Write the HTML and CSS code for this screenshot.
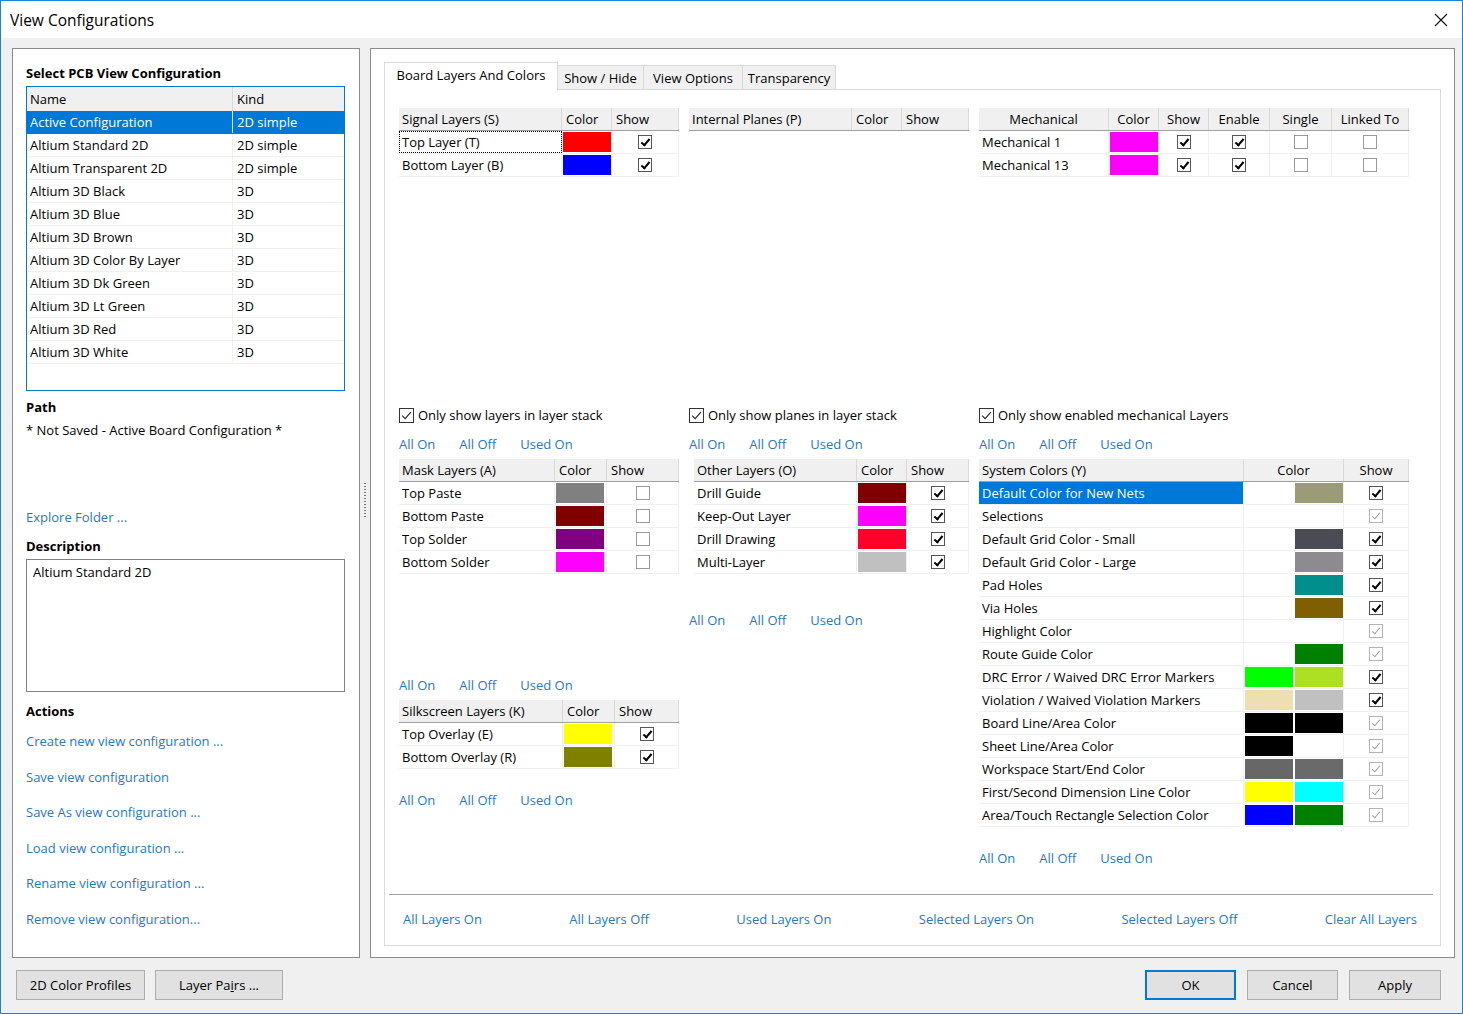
FILE: index.html
```html
<!DOCTYPE html>
<html>
<head>
<meta charset="utf-8">
<title>View Configurations</title>
<link rel="stylesheet" href="styles.css">
</head>
<body>
<div class="window">
  <div class="titlebar">
    <span class="title">View Configurations</span>
    <svg class="close" width="14" height="14" viewBox="0 0 14 14"><path d="M1 1L13 13M13 1L1 13" stroke="#111" stroke-width="1.1" fill="none"/></svg>
  </div>

  <div class="main">
    <div class="left-panel">
      <div class="heading">Select PCB View Configuration</div>
      <div class="list">
        <div class="lr lh"><div>Name</div><div>Kind</div></div>
        <div class="lr sel"><div>Active Configuration</div><div>2D simple</div></div>
        <div class="lr"><div>Altium Standard 2D</div><div>2D simple</div></div>
        <div class="lr"><div>Altium Transparent 2D</div><div>2D simple</div></div>
        <div class="lr"><div>Altium 3D Black</div><div>3D</div></div>
        <div class="lr"><div>Altium 3D Blue</div><div>3D</div></div>
        <div class="lr"><div>Altium 3D Brown</div><div>3D</div></div>
        <div class="lr"><div>Altium 3D Color By Layer</div><div>3D</div></div>
        <div class="lr"><div>Altium 3D Dk Green</div><div>3D</div></div>
        <div class="lr"><div>Altium 3D Lt Green</div><div>3D</div></div>
        <div class="lr"><div>Altium 3D Red</div><div>3D</div></div>
        <div class="lr"><div>Altium 3D White</div><div>3D</div></div>
      </div>
      <div class="heading path-h">Path</div>
      <div class="path">* Not Saved - Active Board Configuration *</div>
      <a class="link explore">Explore Folder ...</a>
      <div class="heading desc-h">Description</div>
      <div class="desc">Altium Standard 2D</div>
      <div class="heading actions-h">Actions</div>
      <div class="actions">
        <a class="link">Create new view configuration ...</a>
        <a class="link">Save view configuration</a>
        <a class="link">Save As view configuration ...</a>
        <a class="link">Load view configuration ...</a>
        <a class="link">Rename view configuration ...</a>
        <a class="link">Remove view configuration...</a>
      </div>
    </div>

    <div class="splitter"><div class="grip"></div></div>

    <div class="right-panel">
      <div class="tabs">
        <div class="tab active">Board Layers And Colors</div>
        <div class="tab t2">Show / Hide</div>
        <div class="tab t3">View Options</div>
        <div class="tab t4">Transparency</div>
      </div>
      <div class="tabpage">
        <div class="columns">
          <!-- Column A -->
          <div class="col">
            <div class="top-block">
              <div class="tbl t-signal">
                <div class="tr th"><div>Signal Layers (S)</div><div>Color</div><div>Show</div></div>
                <div class="tr"><div class="focus">Top Layer (T)</div><div class="swc"><span class="sw" style="background:#ff0000"></span></div><div class="c"><span class="cb on"></span></div></div>
                <div class="tr"><div>Bottom Layer (B)</div><div class="swc"><span class="sw" style="background:#0000ff"></span></div><div class="c"><span class="cb on"></span></div></div>
              </div>
            </div>
            <label class="opt"><svg class="bigcb" width="15" height="15" viewBox="0 0 15 15"><rect x=".5" y=".5" width="14" height="14" fill="#fff" stroke="#333"/><path d="M3.2 7.6l2.9 3L11.9 4.2" fill="none" stroke="#222" stroke-width="1.1"/></svg>Only show layers in layer stack</label>
            <div class="links"><a class="link">All On</a><a class="link">All Off</a><a class="link">Used On</a></div>
            <div class="tbl t-mask">
              <div class="tr th"><div>Mask Layers (A)</div><div>Color</div><div>Show</div></div>
              <div class="tr"><div>Top Paste</div><div class="swc"><span class="sw" style="background:#808080"></span></div><div class="c"><span class="cb off"></span></div></div>
              <div class="tr"><div>Bottom Paste</div><div class="swc"><span class="sw" style="background:#800000"></span></div><div class="c"><span class="cb off"></span></div></div>
              <div class="tr"><div>Top Solder</div><div class="swc"><span class="sw" style="background:#800080"></span></div><div class="c"><span class="cb off"></span></div></div>
              <div class="tr"><div>Bottom Solder</div><div class="swc"><span class="sw" style="background:#ff00ff"></span></div><div class="c"><span class="cb off"></span></div></div>
            </div>
            <div class="links mask-links"><a class="link">All On</a><a class="link">All Off</a><a class="link">Used On</a></div>
            <div class="tbl t-silk">
              <div class="tr th"><div>Silkscreen Layers (K)</div><div>Color</div><div>Show</div></div>
              <div class="tr"><div>Top Overlay (E)</div><div class="swc"><span class="sw" style="background:#ffff00"></span></div><div class="c"><span class="cb on"></span></div></div>
              <div class="tr"><div>Bottom Overlay (R)</div><div class="swc"><span class="sw" style="background:#808000"></span></div><div class="c"><span class="cb on"></span></div></div>
            </div>
            <div class="links silk-links"><a class="link">All On</a><a class="link">All Off</a><a class="link">Used On</a></div>
          </div>

          <!-- Column B -->
          <div class="col">
            <div class="top-block">
              <div class="tbl t-planes">
                <div class="tr th"><div>Internal Planes (P)</div><div>Color</div><div>Show</div></div>
              </div>
            </div>
            <label class="opt"><svg class="bigcb" width="15" height="15" viewBox="0 0 15 15"><rect x=".5" y=".5" width="14" height="14" fill="#fff" stroke="#333"/><path d="M3.2 7.6l2.9 3L11.9 4.2" fill="none" stroke="#222" stroke-width="1.1"/></svg>Only show planes in layer stack</label>
            <div class="links"><a class="link">All On</a><a class="link">All Off</a><a class="link">Used On</a></div>
            <div class="tbl t-other">
              <div class="tr th"><div>Other Layers (O)</div><div>Color</div><div>Show</div></div>
              <div class="tr"><div>Drill Guide</div><div class="swc"><span class="sw" style="background:#800000"></span></div><div class="c"><span class="cb on"></span></div></div>
              <div class="tr"><div>Keep-Out Layer</div><div class="swc"><span class="sw" style="background:#ff00ff"></span></div><div class="c"><span class="cb on"></span></div></div>
              <div class="tr"><div>Drill Drawing</div><div class="swc"><span class="sw" style="background:#ff002a"></span></div><div class="c"><span class="cb on"></span></div></div>
              <div class="tr"><div>Multi-Layer</div><div class="swc"><span class="sw" style="background:#c0c0c0"></span></div><div class="c"><span class="cb on"></span></div></div>
            </div>
            <div class="links other-links"><a class="link">All On</a><a class="link">All Off</a><a class="link">Used On</a></div>
          </div>

          <!-- Column C -->
          <div class="col">
            <div class="top-block">
              <div class="tbl t-mech">
                <div class="tr th"><div>Mechanical</div><div>Color</div><div>Show</div><div>Enable</div><div>Single</div><div>Linked To</div></div>
                <div class="tr"><div>Mechanical 1</div><div class="swc"><span class="sw" style="background:#ff00ff"></span></div><div class="c"><span class="cb on"></span></div><div class="c"><span class="cb on"></span></div><div class="c"><span class="cb off"></span></div><div class="c"><span class="cb off"></span></div></div>
                <div class="tr"><div>Mechanical 13</div><div class="swc"><span class="sw" style="background:#ff00ff"></span></div><div class="c"><span class="cb on"></span></div><div class="c"><span class="cb on"></span></div><div class="c"><span class="cb off"></span></div><div class="c"><span class="cb off"></span></div></div>
              </div>
            </div>
            <label class="opt"><svg class="bigcb" width="15" height="15" viewBox="0 0 15 15"><rect x=".5" y=".5" width="14" height="14" fill="#fff" stroke="#333"/><path d="M3.2 7.6l2.9 3L11.9 4.2" fill="none" stroke="#222" stroke-width="1.1"/></svg>Only show enabled mechanical Layers</label>
            <div class="links"><a class="link">All On</a><a class="link">All Off</a><a class="link">Used On</a></div>
            <div class="tbl t-sys">
              <div class="tr th"><div>System Colors (Y)</div><div>Color</div><div>Show</div></div>
              <div class="tr"><div class="selcell">Default Color for New Nets</div><div class="pair"><span class="sw none"></span><span class="sw" style="background:#9b9c77"></span></div><div class="c"><span class="cb on"></span></div></div>
              <div class="tr"><div>Selections</div><div class="pair"><span class="sw none"></span><span class="sw none"></span></div><div class="c"><span class="cb on dis"></span></div></div>
              <div class="tr"><div>Default Grid Color - Small</div><div class="pair"><span class="sw none"></span><span class="sw" style="background:#4b4b55"></span></div><div class="c"><span class="cb on"></span></div></div>
              <div class="tr"><div>Default Grid Color - Large</div><div class="pair"><span class="sw none"></span><span class="sw" style="background:#8d8b90"></span></div><div class="c"><span class="cb on"></span></div></div>
              <div class="tr"><div>Pad Holes</div><div class="pair"><span class="sw none"></span><span class="sw" style="background:#008f8c"></span></div><div class="c"><span class="cb on"></span></div></div>
              <div class="tr"><div>Via Holes</div><div class="pair"><span class="sw none"></span><span class="sw" style="background:#7f5f00"></span></div><div class="c"><span class="cb on"></span></div></div>
              <div class="tr"><div>Highlight Color</div><div class="pair"><span class="sw none"></span><span class="sw none"></span></div><div class="c"><span class="cb on dis"></span></div></div>
              <div class="tr"><div>Route Guide Color</div><div class="pair"><span class="sw none"></span><span class="sw" style="background:#008000"></span></div><div class="c"><span class="cb on dis"></span></div></div>
              <div class="tr"><div>DRC Error / Waived DRC Error Markers</div><div class="pair"><span class="sw" style="background:#00ff00"></span><span class="sw" style="background:#addf22"></span></div><div class="c"><span class="cb on"></span></div></div>
              <div class="tr"><div>Violation / Waived Violation Markers</div><div class="pair"><span class="sw" style="background:#eedfb3"></span><span class="sw" style="background:#c0c0c0"></span></div><div class="c"><span class="cb on"></span></div></div>
              <div class="tr"><div>Board Line/Area Color</div><div class="pair"><span class="sw" style="background:#000000"></span><span class="sw" style="background:#000000"></span></div><div class="c"><span class="cb on dis"></span></div></div>
              <div class="tr"><div>Sheet Line/Area Color</div><div class="pair"><span class="sw" style="background:#000000"></span><span class="sw" style="background:#ffffff"></span></div><div class="c"><span class="cb on dis"></span></div></div>
              <div class="tr"><div>Workspace Start/End Color</div><div class="pair"><span class="sw" style="background:#676767"></span><span class="sw" style="background:#6b6a6a"></span></div><div class="c"><span class="cb on dis"></span></div></div>
              <div class="tr"><div>First/Second Dimension Line Color</div><div class="pair"><span class="sw" style="background:#ffff00"></span><span class="sw" style="background:#00ffff"></span></div><div class="c"><span class="cb on dis"></span></div></div>
              <div class="tr"><div>Area/Touch Rectangle Selection Color</div><div class="pair"><span class="sw" style="background:#0000ff"></span><span class="sw" style="background:#008000"></span></div><div class="c"><span class="cb on dis"></span></div></div>
            </div>
            <div class="links sys-links"><a class="link">All On</a><a class="link">All Off</a><a class="link">Used On</a></div>
          </div>
        </div>
        <div class="sep"></div>
        <div class="bottom-links">
          <a class="link">All Layers On</a>
          <a class="link">All Layers Off</a>
          <a class="link">Used Layers On</a>
          <a class="link">Selected Layers On</a>
          <a class="link">Selected Layers Off</a>
          <a class="link">Clear All Layers</a>
        </div>
      </div>
    </div>
  </div>

  <div class="footer">
    <button class="btn b-profiles">2D Color Profiles</button>
    <button class="btn b-pairs">Layer Pa<u>i</u>rs ...</button>
    <div class="spacer"></div>
    <button class="btn b-ok">OK</button>
    <button class="btn b-cancel">Cancel</button>
    <button class="btn b-apply">Apply</button>
  </div>
</div>
</body>
</html>
```

FILE: styles.css
```css
* { box-sizing: border-box; }
html, body { margin: 0; padding: 0; }
body {
  font-family: "Open Sans", "Noto Sans", sans-serif;
  font-size: 13px;
  line-height: 18px;
  color: #000;
  background: #fff;
}
.window {
  width: 1463px;
  height: 1014px;
  border: 1px solid #1883d7;
  background: #f0f0f0;
  display: flex;
  flex-direction: column;
}
.titlebar {
  height: 37px;
  flex: none;
  background: #fff;
  display: flex;
  align-items: center;
  justify-content: space-between;
  padding: 0 14px 0 9px;
}
.title { font-size: 15.5px; line-height: 20px; }
.close { display: block; }

.main {
  display: flex;
  padding: 10px 7px 0 11px;
  flex: none;
}
.left-panel {
  width: 348px;
  height: 910px;
  background: #fff;
  border: 1px solid #8c8c8c;
  padding: 15px 14px 0 13px;
  display: flex;
  flex-direction: column;
}
.heading { font-weight: bold; height: 18px; white-space: nowrap; }
.list {
  margin-top: 4px;
  width: 319px;
  height: 305px;
  border: 1px solid #0078d7;
  flex: none;
}
.lr {
  display: grid;
  grid-template-columns: 206px 1fr;
  height: 23px;
  border-bottom: 1px solid #f0f0f0;
}
.lr > div {
  display: flex;
  align-items: center;
  padding-left: 3px;
  white-space: nowrap;
}
.lr > div:first-child { border-right: 1px solid #f0f0f0; }
.lr > div + div { padding-left: 4px; }
.lh { background: #f0f0f0; border-bottom: none; height: 24px; }
.lh > div:first-child { border-right: 1px solid #d9d9d9; }
.lr.sel { background: #0078d7; color: #fff; border-bottom-color: #0078d7; }
.lr.sel > div:first-child { border-right-color: #cfe3f5; }
.path-h { margin-top: 7px; }
.path { margin-top: 5px; height: 18px; white-space: nowrap; }
.link { color: #1f78c8; text-decoration: none; white-space: nowrap; cursor: pointer; }
.explore { display: block; margin-top: 69px; height: 18px; }
.desc-h { margin-top: 11px; }
.desc {
  margin-top: 4px;
  width: 319px;
  height: 133px;
  border: 1px solid #828282;
  padding: 3px 6px;
}
.actions-h { margin-top: 10px; }
.actions { display: flex; flex-direction: column; }
.actions .link { display: block; height: 18px; margin-top: 17.6px; }
.actions .link:first-child { margin-top: 12px; }

.splitter {
  width: 10px;
  display: flex;
  align-items: center;
  justify-content: center;
}
.grip {
  width: 2px;
  height: 34px;
  margin-bottom: 6px;
  background: repeating-linear-gradient(to bottom, #777 0 1px, transparent 1px 3px);
}

.right-panel {
  width: 1085px;
  height: 910px;
  background: #fff;
  border: 1px solid #8c8c8c;
  padding: 13px 13px 0 13px;
}
.tabs {
  display: flex;
  align-items: flex-end;
  height: 27px;
}
.tab {
  height: 24px;
  background: #f0f0f0;
  border: 1px solid #d9d9d9;
  border-bottom: none;
  border-left: none;
  display: flex;
  align-items: center;
  justify-content: center;
  white-space: nowrap;
}
.tab.active {
  height: 28px;
  width: 174px;
  margin-bottom: -1px;
  background: #fff;
  border-left: 1px solid #d9d9d9;
  position: relative;
  z-index: 1;
  padding-bottom: 3px;
}
.t2 { width: 86px; }
.t3 { width: 99px; }
.t4 { width: 93px; }
.tabpage {
  height: 857px;
  border: 1px solid #d9d9d9;
  padding: 18px 0 0 14px;
}
.columns {
  display: grid;
  grid-template-columns: 280px 280px 430px;
  column-gap: 10px;
  height: 759px;
}
.col { display: flex; flex-direction: column; }
.top-block { height: 298px; flex: none; }
.opt {
  display: flex;
  align-items: center;
  height: 18px;
  white-space: nowrap;
}
.bigcb { display: block; margin-right: 4px; flex: none; }
.links {
  display: flex;
  gap: 24px;
  height: 18px;
  margin-top: 11px;
  margin-bottom: 6px;
}
.mask-links { margin-top: 102px; }
.silk-links { margin-top: 22px; }
.other-links { margin-top: 37px; }
.sys-links { margin-top: 22px; }

.tbl { flex: none; }
.tr {
  display: grid;
  height: 23px;
  border-bottom: 1px solid #f0f0f0;
}
.tr > div {
  display: flex;
  align-items: center;
  padding-left: 3px;
  border-right: 1px solid #f0f0f0;
  white-space: nowrap;
  overflow: hidden;
}
.tr.th { background: #f0f0f0; border-bottom: 1px solid #a0a0a0; }
.tr.th > div { border-right: 1px solid #d9d9d9; }
.tr.th > div + div { padding-left: 4px; }
.tr > div.c { justify-content: center; padding-left: 0; }
.tr > div.swc { padding: 1px 0 1px 1px; align-items: stretch; }
.tr > div.pair { padding: 1px 0 1px 1px; align-items: stretch; gap: 2px; }
.sw { display: block; width: 48px; }
.sw.none { background: transparent; }
.tr > div.focus { outline: 1px dotted #000; outline-offset: -1px; }
.tr > div.selcell { background: #0078d7; color: #fff; }

.t-signal .tr { grid-template-columns: 163px 50px 67px; }
.t-planes .tr { grid-template-columns: 163px 50px 67px; }
.t-mech .tr { grid-template-columns: 130px 50px 50px 61px 62px 77px; }
.t-mech .th > div, .t-mech .th > div + div { justify-content: center; padding-left: 0; }
.t-mask .tr { grid-template-columns: 156px 52px 72px; }
.t-other { margin-left: 5px; }
.t-other .tr { grid-template-columns: 163px 50px 62px; }
.t-silk .tr { grid-template-columns: 164px 52px 64px; }
.t-sys .tr { grid-template-columns: 265px 100px 65px; }
.t-sys .th > div + div { justify-content: center; padding-left: 0; }

.cb {
  display: block;
  width: 14px;
  height: 14px;
  border: 1px solid #555;
  background: #fff;
  position: relative;
}
.cb.off { border-color: #9a9a9a; }
.cb.on::after {
  content: "";
  position: absolute;
  left: 4px;
  top: 1px;
  width: 3px;
  height: 7px;
  border: solid #000;
  border-width: 0 2px 2px 0;
  transform: rotate(40deg);
}
.cb.dis { border-color: #b4b4b4; }
.cb.dis::after { border-color: #a2a2a2; border-width: 0 1.5px 1.5px 0; }

.sep {
  margin: 27px 7px 0 -10px;
  height: 1px;
  background: #a0a0a0;
}
.bottom-links {
  display: flex;
  justify-content: space-between;
  margin: 15px 23px 0 4px;
  height: 18px;
}

.footer {
  display: flex;
  padding: 12px 21px 0 15px;
  gap: 10px;
}
.spacer { flex: 1; }
.btn {
  font-family: inherit;
  font-size: 13px;
  height: 30px;
  background: #e1e1e1;
  border: 1px solid #adadad;
  color: #000;
  padding: 0;
}
.b-profiles { width: 129px; }
.b-pairs { width: 128px; }
.b-ok { width: 91px; border: 2px solid #0078d7; }
.b-cancel { width: 91px; margin-left: 1px; }
.b-apply { width: 92px; margin-left: 1px; }
```
